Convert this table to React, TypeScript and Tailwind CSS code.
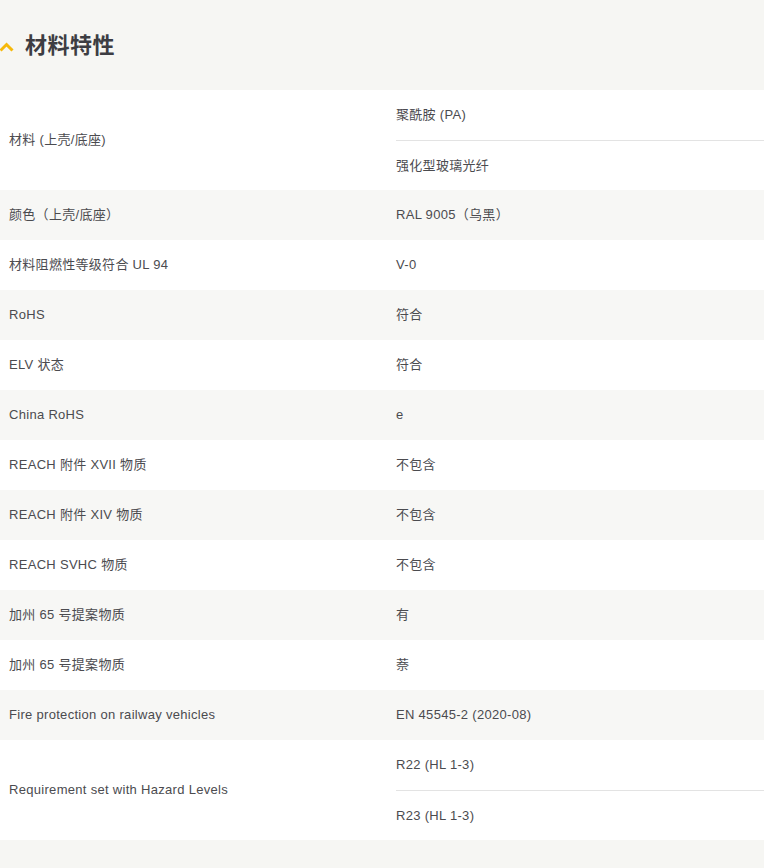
import React from "react";

type Row = { label: string; values: string[] };

const rows: Row[] = [
  { label: "材料 (上壳/底座)", values: ["聚酰胺 (PA)", "强化型玻璃光纤"] },
  { label: "颜色（上壳/底座）", values: ["RAL 9005（乌黑）"] },
  { label: "材料阻燃性等级符合 UL 94", values: ["V-0"] },
  { label: "RoHS", values: ["符合"] },
  { label: "ELV 状态", values: ["符合"] },
  { label: "China RoHS", values: ["e"] },
  { label: "REACH 附件 XVII 物质", values: ["不包含"] },
  { label: "REACH 附件 XIV 物质", values: ["不包含"] },
  { label: "REACH SVHC 物质", values: ["不包含"] },
  { label: "加州 65 号提案物质", values: ["有"] },
  { label: "加州 65 号提案物质", values: ["萘"] },
  { label: "Fire protection on railway vehicles", values: ["EN 45545-2 (2020-08)"] },
  { label: "Requirement set with Hazard Levels", values: ["R22 (HL 1-3)", "R23 (HL 1-3)"] },
];

const font = { fontFamily: '"Liberation Sans", "Noto Sans CJK SC", sans-serif' };

export default function App() {
  return (
    <div className="w-[764px] min-h-[868px] bg-[#f6f6f3] text-[#4b4b4f]" style={font}>
      <div className="h-[90px] flex items-center gap-[11px]">
        <svg width="15" height="10" viewBox="0 0 15 10" className="mt-[3px] -ml-[1px]">
          <path d="M1.5 8.5 L7.5 2.5 L13.5 8.5" fill="none" stroke="#f6b90a" strokeWidth="3" />
        </svg>
        <h2 className="text-[22px] font-bold text-[#3d3d42] tracking-[0.5px]">材料特性</h2>
      </div>
      <div className="flex flex-col">
        {rows.map((r, i) => (
          <div
            key={i}
            className={`flex text-[13px] tracking-[0.3px] ${i % 2 === 0 ? "bg-white" : "bg-[#f7f7f5]"}`}
          >
            <div className="w-[387px] pl-[9px] flex items-center">{r.label}</div>
            <div className="flex-1 flex flex-col">
              {r.values.map((v, j) => (
                <div key={j} className="h-[50px] flex items-center">
                  <div
                    className={`flex-1 h-full flex items-center ml-[9px] ${
                      j > 0 ? "border-t border-[#e3e3e3]" : ""
                    }`}
                  >
                    {v}
                  </div>
                </div>
              ))}
            </div>
          </div>
        ))}
      </div>
    </div>
  );
}
